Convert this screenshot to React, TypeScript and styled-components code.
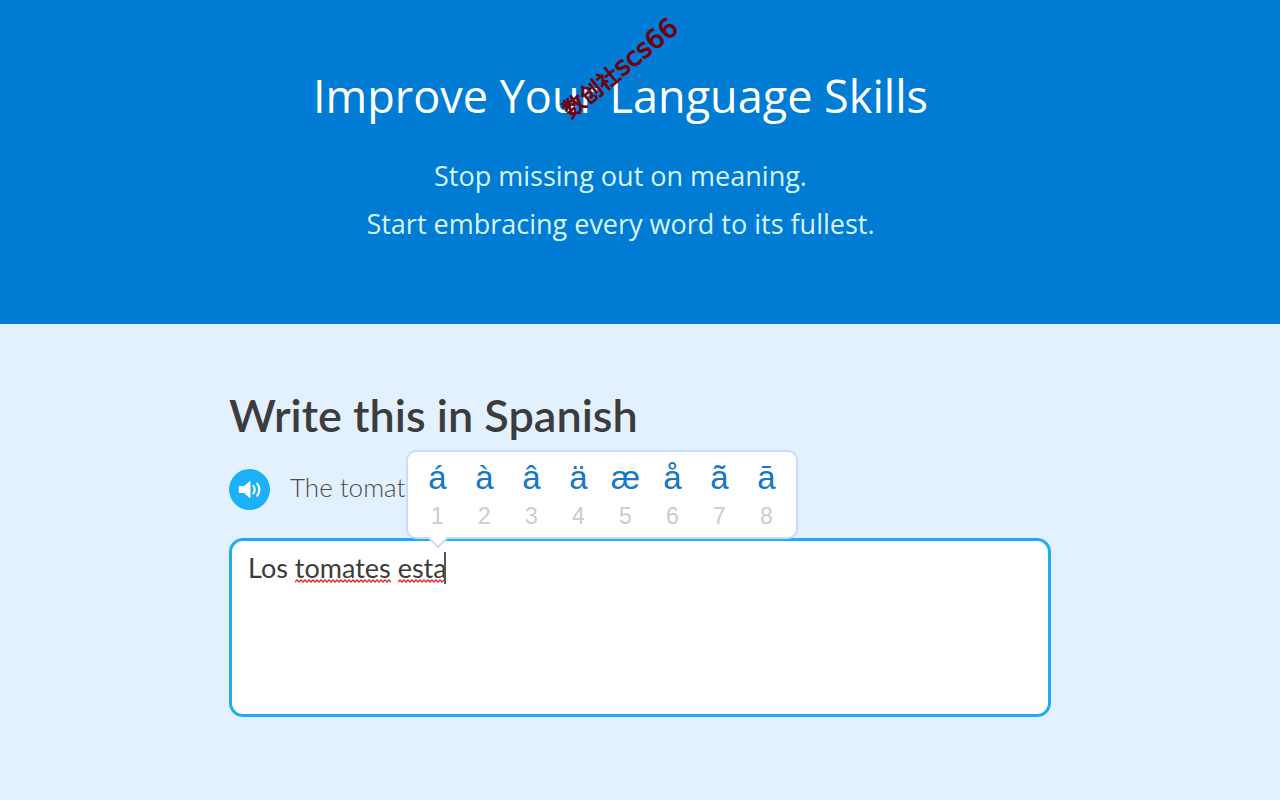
import React from "react";
import styled, { createGlobalStyle } from "styled-components";

const GlobalStyle = createGlobalStyle`
  *, *::before, *::after { box-sizing: border-box; }
  html { min-height: 100%; background: #e3f1ff; }
  body { margin: 0; font-family: Lato, "Liberation Sans", sans-serif; }
  h1, h2, p { margin: 0; font-weight: 400; }
`;

const Hero = styled.header`
  position: relative;
  min-height: 324px;
  padding: 64px 39px 64px 0;
  background: #007cd4;
  color: #fff;
  font-family: "Open Sans", "Noto Sans", sans-serif;
  text-align: center;
`;

const HeroTitle = styled.h1`
  font-size: 45px;
  line-height: 64px;
`;

const HeroText = styled.p`
  padding-top: 24px;
  color: #d9f4ff;
  font-size: 27px;
  line-height: 48px;
`;

const Line = styled.span`
  display: block;
`;

const Watermark = styled.span`
  position: absolute;
  top: 51px;
  left: calc(50% - 91px);
  color: #700010;
  font: 22px/32px "Noto Sans CJK SC", sans-serif;
  -webkit-text-stroke: 1px #700010;
  white-space: nowrap;
  transform: rotate(-39deg);
`;

const WatermarkCode = styled.span`
  font-family: "DejaVu Sans", sans-serif;
  font-size: 26px;
`;

const Exercise = styled.main`
  max-width: 822px;
  margin: 0 auto;
  padding: 63px 0;
`;

const Heading = styled.h2`
  color: #3c3c3c;
  font-size: 45px;
  font-weight: 600;
  line-height: 56px;
`;

const Prompt = styled.div`
  display: flex;
  align-items: flex-start;
  gap: 20px;
  padding: 26px 0 28px;
`;

const SpeakButton = styled.button`
  display: flex;
  width: 41px;
  height: 41px;
  padding: 0;
  border: 0;
  border-radius: 50%;
  background: #1cb0f6;
`;

const PromptText = styled.p`
  color: #4b4b4b;
  font-size: 26px;
  font-weight: 300;
  line-height: 36px;
`;

const Answer = styled.div`
  position: relative;
`;

const AnswerInput = styled.textarea`
  display: block;
  width: 100%;
  height: 179px;
  padding: 11px 16px;
  border: 3px solid #1fadf0;
  border-radius: 14px;
  outline: 0;
  resize: none;
  background: #fff;
  color: #3c3c3c;
  caret-color: transparent;
  font: 27px/32px Lato, "Liberation Sans", sans-serif;
`;

const Marks = styled.div`
  position: absolute;
  top: 14px;
  left: 66px;
  display: flex;
  align-items: flex-end;
  height: 32px;
  pointer-events: none;
`;

const Squiggle = styled.svg<{ $gap: number }>`
  height: 4px;
  margin: 0 ${(p) => p.$gap}px 1px 0;
`;

const Caret = styled.span`
  width: 2px;
  height: 32px;
  background: #555;
`;

const AccentMenu = styled.div`
  position: absolute;
  bottom: 178px;
  left: 177px;
  display: flex;
  height: 89px;
  padding: 8px 6px 4px;
  border: 2px solid #c8dcff;
  border-radius: 10px;
  background: #fff;
`;

const AccentButton = styled.button`
  display: flex;
  flex-direction: column;
  align-items: center;
  width: 47px;
  padding: 0;
  border: 0;
  background: none;
  font-family: "Liberation Sans", Arial, sans-serif;
`;

const Accent = styled.span`
  color: #1478c8;
  font-size: 33px;
  line-height: 36px;
`;

const Key = styled.span`
  color: #ccc;
  font-size: 23px;
  line-height: 40px;
`;

const Pointer = styled.svg`
  position: absolute;
  top: 85px;
  left: 20px;
  width: 20px;
  height: 12px;
`;

const accents = ["á", "à", "â", "ä", "æ", "å", "ã", "ā"];

function SpellingMark({ width, gap }: { width: number; gap: number }) {
  let d = "M0 3";
  for (let x = 2; x <= width; x += 2) d += ` L${x} ${x % 4 === 2 ? 1 : 3}`;
  return (
    <Squiggle $gap={gap} width={width} height={4}>
      <path d={d} fill="none" stroke="#e8242c" strokeWidth="1.4" />
    </Squiggle>
  );
}

export default function App() {
  return (
    <>
      <GlobalStyle />
      <Hero>
        <HeroTitle>Improve Your Language Skills</HeroTitle>
        <HeroText>
          <Line>Stop missing out on meaning.</Line>
          <Line>Start embracing every word to its fullest.</Line>
        </HeroText>
        <Watermark>
          数创社<WatermarkCode>scs66</WatermarkCode>
        </Watermark>
      </Hero>
      <Exercise>
        <Heading>Write this in Spanish</Heading>
        <Prompt>
          <SpeakButton type="button" aria-label="Listen">
            <svg width="41" height="41" viewBox="0 0 42 42">
              <path
                d="M11 17.5h4.500l5.300-4.800c.6-.5 1.200-.2 1.200.6v15.600c0 .8-.6 1.100-1.200.6l-5.300-4.800H11c-.6 0-1-.4-1-1v-5.200c0-.6.4-1 1-1z"
                fill="#fff"
              />
              <path
                d="M25 17.300q2.600 3.800 0 7.600M29 15q4.200 6.100 0 12.200"
                fill="none"
                stroke="#fff"
                strokeWidth="2.200"
                strokeLinecap="round"
              />
            </svg>
          </SpeakButton>
          <PromptText>The tomat</PromptText>
        </Prompt>
        <Answer>
          <AnswerInput
            aria-label="Write this in Spanish"
            defaultValue="Los tomates esta"
            spellCheck={false}
          />
          <Marks aria-hidden="true">
            <SpellingMark width={96} gap={7} />
            <SpellingMark width={46} gap={0} />
            <Caret />
          </Marks>
          <AccentMenu role="group" aria-label="Accented letters">
            {accents.map((letter, i) => (
              <AccentButton type="button" key={letter}>
                <Accent>{letter}</Accent>
                <Key>{i + 1}</Key>
              </AccentButton>
            ))}
            <Pointer viewBox="0 0 20 12">
              <path d="M0 0H20V1H19L10 10 1 1H0Z" fill="#fff" />
              <path d="M0 1H1L10 10 19 1H20" fill="none" stroke="#c8dcff" strokeWidth="2" />
            </Pointer>
          </AccentMenu>
        </Answer>
      </Exercise>
    </>
  );
}
